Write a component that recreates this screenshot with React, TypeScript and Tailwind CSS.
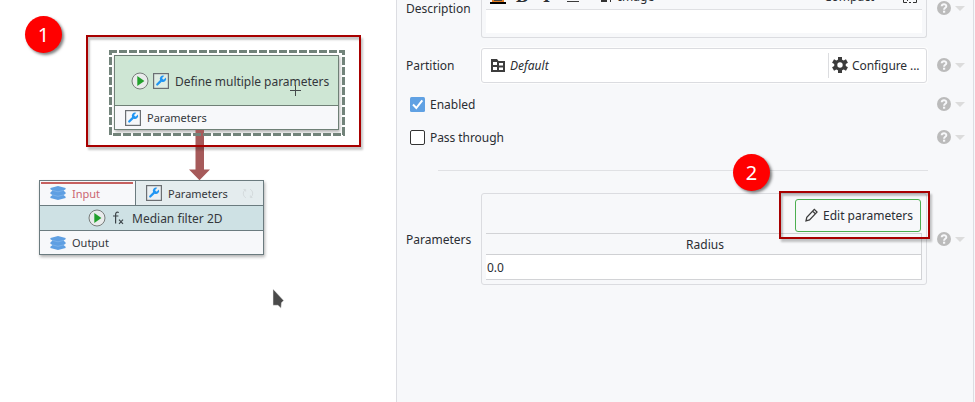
import type { ReactNode } from 'react';

function Wrench() {
  return (
    <svg className="block shrink-0" width="16" height="16" viewBox="0 0 16 16">
      <rect x="0.6" y="0.6" width="14.8" height="14.8" fill="#f4f6f9" fillOpacity=".45" stroke="#6b6f73" strokeWidth="1.2" />
      <path
        transform="translate(1.5 1.5) scale(.53)"
        fill="#2196f3"
        d="M14.7 6.3a1 1 0 0 0 0 1.4l1.6 1.6a1 1 0 0 0 1.4 0l3.77-3.77a6 6 0 0 1-7.94 7.94l-6.91 6.91a2.12 2.12 0 0 1-3-3l6.91-6.91a6 6 0 0 1 7.94-7.94l-3.76 3.76z"
      />
    </svg>
  );
}

function Play() {
  return (
    <svg className="block shrink-0" width="18" height="18" viewBox="0 0 18 18">
      <circle cx="9" cy="9" r="8" fill="#e9ebeb" stroke="#777c7a" strokeWidth="1" />
      <path d="M6.3 3.9 L13.4 9 L6.3 14.1 Z" fill="#22a02c" />
    </svg>
  );
}

function Layers() {
  return (
    <svg className="block shrink-0" width="16" height="14" viewBox="0 0 16 14">
      <path fill="#5f9fe2" d="M8 0 L15.6 2 V3.2 L13.5 4.4 L15.6 6.4 V7.8 L13.5 8.9 L15.6 10.8 V12 L8 14 L.4 12 V10.8 L2.5 8.9 L.4 7.8 V6.4 L2.5 4.4 L.4 3.2 V2 Z" />
      <path d="M2.5 4.4 L8 5.8 L13.5 4.4 M2.5 8.9 L8 10.3 L13.5 8.9" fill="none" stroke="#8dbcec" strokeWidth=".6" />
    </svg>
  );
}

function Help() {
  return (
    <div className="ml-[10px] flex shrink-0 items-center gap-[4px]">
      <svg className="block" width="14" height="14" viewBox="0 0 14 14">
        <circle cx="7" cy="7" r="7" fill="#bbbbbb" />
        <path d="M4.7 5.3 C4.8 2.5 9.4 2.5 9.3 5.2 C9.3 6.9 7.1 6.8 7.1 8.8" fill="none" stroke="#f7f8fa" strokeWidth="2" />
        <rect x="6" y="9.7" width="2.2" height="2" fill="#f7f8fa" />
      </svg>
      <svg className="mt-px block" width="10" height="5" viewBox="0 0 10 5">
        <path d="M0 0 H10 L5 5 Z" fill="#dcdcdc" />
      </svg>
    </div>
  );
}

function Row({ label, className, children }: { label: string; className: string; children: ReactNode }) {
  return (
    <div className={'flex items-center pl-[9px] ' + className}>
      <span className="mt-px w-[75px] shrink-0 whitespace-nowrap">{label}</span>
      {children}
      <div className="mb-px">
        <Help />
      </div>
    </div>
  );
}

function Badge({ n, className }: { n: string; className: string }) {
  return (
    <div className={'absolute flex size-[37px] items-center justify-center rounded-full bg-[#ff0000] text-[20px] leading-none text-white shadow-[2px_2px_3px_rgba(0,0,0,0.5)] ' + className}>
      {n}
    </div>
  );
}

function Highlight({ className }: { className: string }) {
  return (
    <div className={'absolute border-2 border-[#a80000] shadow-[2px_3px_2px_rgba(0,0,0,0.22),inset_2px_3px_2px_rgba(0,0,0,0.22)] ' + className} />
  );
}

function Canvas() {
  return (
    <div className="relative w-[396px] shrink-0 bg-white text-[#34373b]">
      <div className="absolute left-[114px] top-[55px] flex h-[75px] w-[225px] flex-col border border-[#6f8076] bg-[#f7f8fa] shadow-[1px_2px_3px_rgba(0,0,0,0.3)]">
        <div className="flex h-[50px] items-center border-b border-[#6f8076] bg-[#cee6d4] pl-[16px]">
          <Play />
          <span className="ml-[4px]"><Wrench /></span>
          <span className="ml-[6px] mt-[3px] whitespace-nowrap text-[12px] tracking-[-0.03px]">Define multiple parameters</span>
        </div>
        <div className="flex flex-1 items-center pl-[10px]">
          <Wrench />
          <span className="ml-[6px] mt-[1px] whitespace-nowrap text-[11px]">Parameters</span>
        </div>
      </div>
      <svg className="absolute left-0 top-0" width="396" height="402" viewBox="0 0 396 402">
        <path d="M195.5 130 H204 V169.5 H210 L199.5 180.3 L189 169.5 H195.5 Z" fill="#a65a5a" />
        <g stroke="#72837a" strokeWidth="3" strokeDasharray="8 2" fill="none">
          <path d="M109 51.5 H345" />
          <path d="M113 134.5 H345" />
          <path d="M110.5 57 V135" />
          <path d="M343.5 57 V135" />
          <path d="M110.5 50 V55 M343.5 50 V55" />
        </g>
        <path d="M290 90.5 H301 M295.5 85 V96" stroke="#45494b" strokeWidth="1" />
        <path d="M273 289 V305.3 H278 L281 308.3 L281.5 302.8 L283.7 300.5 Z" fill="#4a4a4a" stroke="#eeeeee" strokeWidth=".5" />
      </svg>
      <div className="absolute left-[39px] top-[180px] flex h-[75px] w-[225px] flex-col border border-[#6b7b7f] bg-[#f7f8fa] shadow-[1px_2px_3px_rgba(0,0,0,0.3)]">
        <div className="flex h-[25px] border-b border-[#6b7b7f] text-[11px]">
          <div className="relative flex w-[96px] items-center border-r border-[#6b7b7f] pl-[10px] text-[#cb6570]">
            <div className="absolute left-[1px] top-[1px] h-[2px] w-[92px] bg-[#c6605f]" />
            <Layers />
            <span className="ml-[6px] mt-[2px]">Input</span>
          </div>
          <div className="flex flex-1 items-center bg-[#e4ecee] pl-[10px]">
            <Wrench />
            <span className="ml-[6px] mt-[2px]">Parameters</span>
            <svg className="ml-[14px] block" width="12" height="13" viewBox="0 0 14 14" fill="none" stroke="#d3dadc" strokeWidth="1.1">
              <path d="M4.5 12 A5.5 5.5 0 0 1 3.5 2.8 M1.8 2.3 H4.2 V4.7 M9.5 2 A5.5 5.5 0 0 1 10.5 11.2 M12.2 11.7 H9.8 V9.3" />
            </svg>
          </div>
        </div>
        <div className="flex h-[25px] items-center border-b border-[#6b7b7f] bg-[#cee1e4] pl-[48px]">
          <Play />
          <svg className="ml-[6px] block" width="12" height="14" viewBox="0 0 12 14" fill="none" stroke="#3c4448" strokeWidth="1.2">
            <path d="M6.8 1.5 C4.2 .5 3.6 1.8 3.6 4 V12.5 M1 5 H6.4 M7 8.7 L11 12.8 M11 8.7 L7 12.8" />
          </svg>
          <span className="ml-[8px] mt-[2px] whitespace-nowrap text-[12px]">Median filter 2D</span>
        </div>
        <div className="flex flex-1 items-center pl-[10px] text-[11px]">
          <Layers />
          <span className="ml-[6px] mt-[1px]">Output</span>
        </div>
      </div>
      <Highlight className="left-[86px] top-[35px] h-[112px] w-[275px]" />
      <Badge n="1" className="left-[25px] top-[16px]" />
    </div>
  );
}

export default function App() {
  return (
    <div className="relative flex h-[402px] w-[975px] overflow-hidden bg-[#f7f8fa] font-['Noto_Sans',sans-serif] text-[12px] leading-[18px] text-[#2b2e33]">
      <Canvas />
      <div className="flex w-[578px] shrink-0 flex-col border-x border-[#dcdde2]">
        <Row label="Description" className="h-[17px]">
          <div className="h-[38px] w-[446px] shrink-0 self-start rounded-b-[3px] border border-t-0 border-[#dbdce0] px-[4px]">
            <div className="flex h-[10px] items-start border-b border-[#dfe0e3]">
              <svg className="ml-[4px] block shrink-0" width="16" height="4" viewBox="0 0 16 4">
                <path d="M0 2 H16 V4 H0Z" fill="#000" />
                <path d="M2 0 H14 V2 H2Z" fill="#e67e22" />
                <path d="M4 0 H12 V1 H4Z" fill="#444" />
              </svg>
              <span className="-mt-[13px] ml-[10px] w-[27px] font-['Liberation_Serif',serif] text-[18px] font-bold">B</span>
              <span className="-mt-[13px] w-[24px] font-['Liberation_Serif',serif] text-[18px] font-bold">I</span>
              <div className="mt-px h-px w-[12px] bg-[#3b3b3b]" />
              <svg className="ml-[22px] block shrink-0" width="12" height="2" viewBox="0 0 12 2">
                <path d="M0 0 H6 V2 H0Z M9 0 H10 V2 H9Z" fill="#333" />
              </svg>
              <span className="-mt-[12px] ml-[5px] w-[206px]">Image</span>
              <span className="-mt-[12px] w-[78px]">Compact</span>
              <svg className="block shrink-0" width="16" height="3" viewBox="0 0 16 3" fill="none" stroke="#333">
                <path d="M1.5 0 V2.5 H5 M7 2.5 H9 M11 2.5 H14.5 V0 M5.5 0 V1" />
              </svg>
            </div>
            <div className="h-[23px] bg-white" />
          </div>
        </Row>
        <Row label="Partition" className="mt-[31px] h-[35px]">
          <div className="flex h-[35px] w-[446px] shrink-0 items-center rounded-[3px] border border-[#dbdce0] bg-white shadow-[0_0_0_1px_#fdfdfd]">
            <svg className="ml-[9px] block" width="14" height="13" viewBox="0 0 14 13">
              <path d="M0 0 H6 L7.5 2 H14 V13 H0Z" fill="#3d3d3d" />
              <path d="M2 3 H6 V6 H2Z M8 4 H12 V6.5 H8Z M2 8 H6 V11 H2Z M8 8.5 H12 V11 H8Z" fill="#fff" />
            </svg>
            <span className="mt-px ml-[5px] flex-1 italic">Default</span>
            <div className="h-[25px] w-px bg-[#dcdde0]" />
            <svg className="mb-px ml-[3px] block" width="16" height="16" viewBox="-8 -8 16 16">
              <g fill="#3b3b3b">
                <circle r="5.8" />
                <rect x="-2" y="-8" width="4" height="16" />
                <rect x="-2" y="-8" width="4" height="16" transform="rotate(60)" />
                <rect x="-2" y="-8" width="4" height="16" transform="rotate(120)" />
              </g>
              <circle r="2.7" fill="#fff" />
            </svg>
            <span className="mt-px ml-[4px] w-[74px] whitespace-nowrap tracking-[-0.08px]">Configure ...</span>
          </div>
        </Row>
        <div className="mt-[12px] flex h-[18px] items-center pl-[13px]">
          <svg className="block" width="15" height="15" viewBox="0 0 15 15">
            <rect width="15" height="15" rx="1.5" fill="#60a1e3" />
            <path d="M3 7.5 L6.3 11 L12.3 3.3" fill="none" stroke="#fff" strokeWidth="2" />
          </svg>
          <span className="ml-[5px] mt-[2px] w-[497px]">Enabled</span>
          <Help />
        </div>
        <div className="mt-[15px] flex h-[18px] items-center pl-[13px]">
          <div className="size-[15px] rounded-[2px] border border-[#333] bg-white" />
          <span className="ml-[5px] mt-[2px] w-[497px] tracking-[-0.06px]">Pass through</span>
          <Help />
        </div>
        <div className="ml-[41px] mt-[24px] h-px w-[490px] shrink-0 bg-[#e0e1e4]" />
        <Row label="Parameters" className="mt-[22px] h-[92px]">
          <div className="flex h-[92px] w-[446px] shrink-0 flex-col rounded-[3px] border border-[#dbdce0] px-[4px] pt-[5px]">
            <button className="mr-px flex h-[33px] w-[126px] items-center self-end rounded-[3px] border border-[#4caf50] bg-[#f7f8fa] pl-[9px]">
              <svg className="mb-px block" width="13" height="14" viewBox="0 0 13 14" fill="none" stroke="#3b3b3b" strokeWidth="1.3">
                <path d="M1 12.8 L1.8 9.2 L9.3 1.4 L12 4.1 L4.5 11.9 Z M7.6 3.1 L10.3 5.8" />
              </svg>
              <span className="mt-px ml-[5px] whitespace-nowrap">Edit parameters</span>
            </button>
            <div className="mt-px flex h-[47px] w-[436px] flex-col border border-l-0 border-[#d2d3d6]">
              <div className="flex h-[21px] items-center justify-center border-b border-[#cfd0d3] pl-[3px] pt-[2px]">Radius</div>
              <div className="flex flex-1 items-center bg-white pl-[1px] pt-[2px]">0.0</div>
            </div>
          </div>
        </Row>
      </div>
      <Highlight className="left-[779px] top-[191px] h-[48px] w-[151px]" />
      <Badge n="2" className="left-[733px] top-[154px]" />
    </div>
  );
}
